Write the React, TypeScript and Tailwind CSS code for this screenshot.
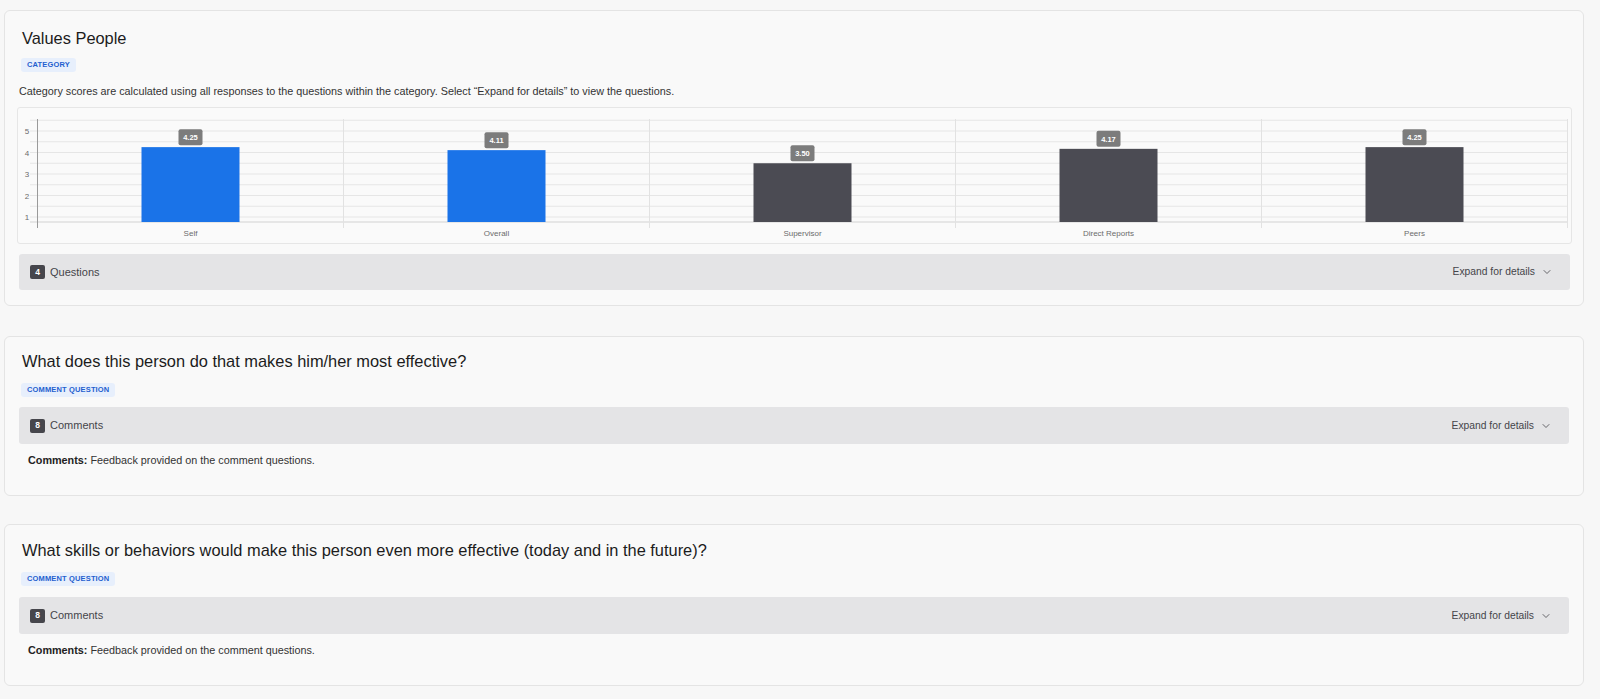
import * as React from "react";
import { ChevronDown } from "lucide-react";

type Bar = { label: string; value: number; color: string };

const BARS: Bar[] = [
  { label: "Self", value: 4.25, color: "#1a73e8" },
  { label: "Overall", value: 4.11, color: "#1a73e8" },
  { label: "Supervisor", value: 3.5, color: "#4b4b53" },
  { label: "Direct Reports", value: 4.17, color: "#4b4b53" },
  { label: "Peers", value: 4.25, color: "#4b4b53" },
];

// chart geometry, in chart-box coordinates (box inner origin)
const AXIS_X = 19.5;
const COL_W = 306;
const BASE_Y = 114;
const yOf = (v: number) => 130.5 - 21.5 * v;

function Badge({ children }: { children: React.ReactNode }) {
  return (
    <span className="flex h-[14px] items-center rounded-[3px] bg-[#e7effc] px-[6px] text-[7.5px] font-bold uppercase leading-none tracking-[0.02em] text-[#1f5fcf]">
      {children}
    </span>
  );
}

function ExpandBar({ count, label, tall }: { count: number; label: string; tall?: boolean }) {
  return (
    <div
      className={
        "mx-[2px] flex items-center rounded-[3px] bg-[#e4e4e6] pl-[11px] pr-[17px] " + (tall ? "h-[37px]" : "h-[36px]")
      }
    >
      <span className="flex h-[14px] w-[15px] items-center justify-center rounded-[2px] bg-[#46464c] text-[8.5px] font-bold text-white">
        {count}
      </span>
      <span className="ml-[5px] text-[11px] text-[#45454a]">{label}</span>
      <span className="ml-auto flex items-center gap-[6px] text-[10.3px] text-[#45454a]">
        Expand for details
        <ChevronDown size={12} strokeWidth={1.6} />
      </span>
    </div>
  );
}

function Chart() {
  const grid: number[] = [];
  for (let v = 1; v <= 5.5; v += 0.5) grid.push(v);
  return (
    <div className="h-[137px] rounded-[3px] border border-[#e6e6e6] bg-[#fafafa]">
      <svg width="100%" height="135" viewBox="0 0 1553 135" className="block">
        {grid.map((v) => (
          <line key={v} x1={12} x2={1550} y1={yOf(v)} y2={yOf(v)} stroke="#e6e6e6" strokeWidth={1} />
        ))}
        <line x1={12} x2={1550} y1={BASE_Y} y2={BASE_Y} stroke="#d2d2d2" strokeWidth={1} />
        {[1, 2, 3, 4, 5].map((c) => (
          <line
            key={c}
            x1={AXIS_X + COL_W * c}
            x2={AXIS_X + COL_W * c}
            y1={11}
            y2={120}
            stroke="#e2e2e2"
            strokeWidth={1}
          />
        ))}
        <line x1={AXIS_X} x2={AXIS_X} y1={11} y2={120} stroke="#9a9a9a" strokeWidth={1} />
        {[1, 2, 3, 4, 5].map((v) => (
          <text
            key={v}
            x={9}
            y={yOf(v) + 3}
            textAnchor="middle"
            fontSize={8}
            fill="#6b6b6b"
            fontFamily="'Liberation Sans', Arial, sans-serif"
          >
            {v}
          </text>
        ))}
        {BARS.map((b, i) => {
          const cx = AXIS_X + COL_W * (i + 0.5);
          const top = yOf(b.value);
          return (
            <g key={b.label}>
              <rect x={cx - 49} y={top} width={98} height={BASE_Y - top} fill={b.color} />
              <rect x={cx - 12} y={top - 18} width={24} height={16} rx={2} fill="#7c7c7c" />
              <text
                x={cx}
                y={top - 7}
                textAnchor="middle"
                fontSize={7.5}
                fontWeight={700}
                fill="#ffffff"
                fontFamily="'Liberation Sans', Arial, sans-serif"
              >
                {b.value.toFixed(2)}
              </text>
              <text
                x={cx}
                y={128}
                textAnchor="middle"
                fontSize={8}
                fill="#6b6b6b"
                fontFamily="'Liberation Sans', Arial, sans-serif"
              >
                {b.label}
              </text>
            </g>
          );
        })}
      </svg>
    </div>
  );
}

function CommentCard({ title, className, last }: { title: string; className?: string; last?: boolean }) {
  return (
    <section
      className={
        "rounded-[6px] border border-[#e4e4e4] bg-[#f9f9f9] px-[12px] " +
        (last ? "pb-[28px] pt-[15px] " : "pb-[28px] pt-[14px] ") +
        (className ?? "")
      }
    >
      <h2 className="pl-[5px] text-[16.4px] leading-[20px] text-[#1c1c1c]">{title}</h2>
      <div className="mt-[12px] flex pl-[4px]">
        <Badge>Comment question</Badge>
      </div>
      <div className={last ? "mt-[11px]" : "mt-[10px]"}>
        <ExpandBar count={8} label="Comments" tall />
      </div>
      <p className="mt-[9px] pl-[11px] text-[10.8px] leading-[14px] text-[#333]">
        <b className="font-bold text-[#222]">Comments:</b> Feedback provided on the comment questions.
      </p>
    </section>
  );
}

export default function App() {
  return (
    <div
      className="min-h-[699px] bg-[#f7f7f7] pb-[14px] pl-[4px] pr-[16px] pt-[10px]"
      style={{ fontFamily: "'Liberation Sans', Arial, sans-serif" }}
    >
      <section className="rounded-[6px] border border-[#e4e4e4] bg-[#f9f9f9] px-[12px] pb-[15px] pt-[17px] pr-[11px]">
        <h2 className="pl-[5px] text-[16.4px] leading-[20px] text-[#1c1c1c]">Values People</h2>
        <div className="mt-[10px] flex pl-[4px]">
          <Badge>Category</Badge>
        </div>
        <p className="mt-[12px] pl-[2px] text-[10.8px] leading-[14px] text-[#333]">
          Category scores are calculated using all responses to the questions within the category. Select “Expand for
          details” to view the questions.
        </p>
        <div className="mt-[9px]">
          <Chart />
        </div>
        <div className="mt-[10px]">
          <ExpandBar count={4} label="Questions" />
        </div>
      </section>

      <CommentCard className="mt-[30px]" title="What does this person do that makes him/her most effective?" />
      <CommentCard
        className="mt-[28px]"
        last
        title="What skills or behaviors would make this person even more effective (today and in the future)?"
      />
    </div>
  );
}
